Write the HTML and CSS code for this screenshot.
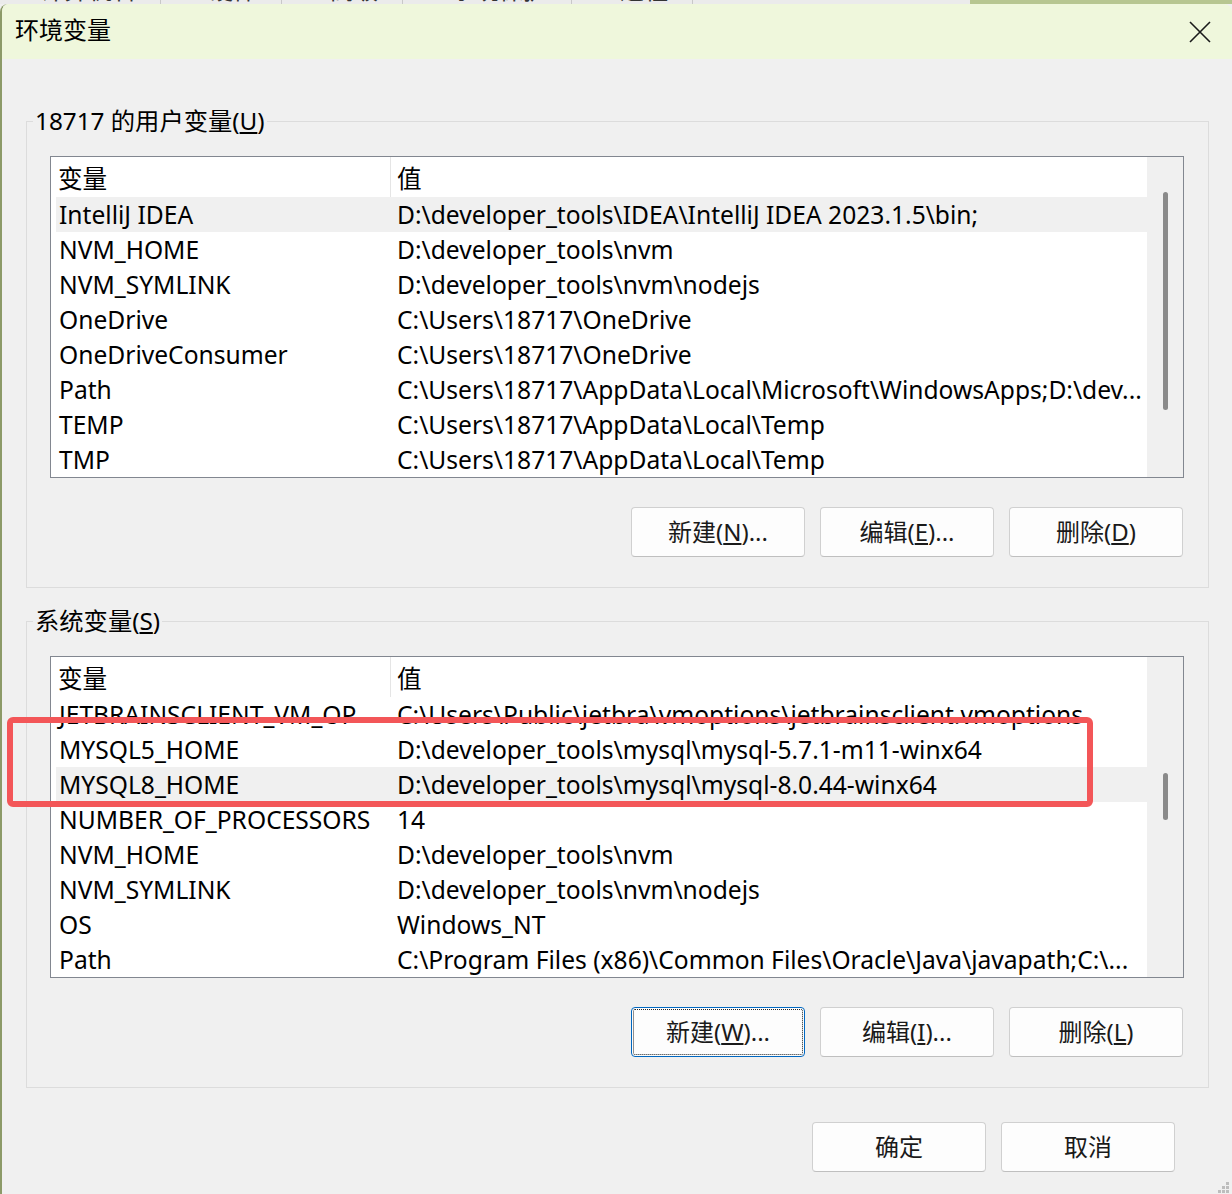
FILE: index.html
```html
<!DOCTYPE html>
<html lang="zh-CN">
  <head>
    <meta charset="UTF-8" />
    <title>环境变量</title>
    <link rel="stylesheet" href="styles.css">
  </head>
  <body>
    <!-- Ventana de atrás (solo se ve un borde) -->
    <div class="behind">
      <div class="behind-tabs">
        <span>计算机名</span><span>硬件</span><span>高级</span><span>系统保护</span><span>远程</span>
      </div>
      <div class="behind-title"></div>
    </div>

    <div class="window">
      <div class="titlebar">
        <div class="title">环境变量</div>
        <button class="close" aria-label="关闭">
          <svg width="22" height="22" viewBox="0 0 22 22">
            <path d="M1 1 L21 21 M21 1 L1 21" stroke="#1a1a1a" stroke-width="1.6" fill="none" />
          </svg>
        </button>
      </div>

      <div class="content">
        <!-- Variables de usuario -->
        <fieldset class="group">
          <legend>18717 的用户变量(<u>U</u>)</legend>
          <div class="list">
            <div class="list-main">
              <div class="list-head">
                <div class="col-name">变量</div>
                <div class="col-value">值</div>
              </div>
              <div class="list-rows">
                <div class="row hover"><div class="cell-name">IntelliJ IDEA</div><div class="cell-value">D:\developer_tools\IDEA\IntelliJ IDEA 2023.1.5\bin;</div></div>
                <div class="row"><div class="cell-name">NVM_HOME</div><div class="cell-value">D:\developer_tools\nvm</div></div>
                <div class="row"><div class="cell-name">NVM_SYMLINK</div><div class="cell-value">D:\developer_tools\nvm\nodejs</div></div>
                <div class="row"><div class="cell-name">OneDrive</div><div class="cell-value">C:\Users\18717\OneDrive</div></div>
                <div class="row"><div class="cell-name">OneDriveConsumer</div><div class="cell-value">C:\Users\18717\OneDrive</div></div>
                <div class="row"><div class="cell-name">Path</div><div class="cell-value">C:\Users\18717\AppData\Local\Microsoft\WindowsApps;D:\dev...</div></div>
                <div class="row"><div class="cell-name">TEMP</div><div class="cell-value">C:\Users\18717\AppData\Local\Temp</div></div>
                <div class="row"><div class="cell-name">TMP</div><div class="cell-value">C:\Users\18717\AppData\Local\Temp</div></div>
              </div>
            </div>
            <div class="scrollbar"><div class="thumb thumb-user"></div></div>
          </div>
          <div class="actions">
            <button class="btn">新建(<u>N</u>)...</button>
            <button class="btn">编辑(<u>E</u>)...</button>
            <button class="btn">删除(<u>D</u>)</button>
          </div>
        </fieldset>

        <!-- Variables del sistema -->
        <fieldset class="group group-system">
          <legend>系统变量(<u>S</u>)</legend>
          <div class="list">
            <div class="list-main">
              <div class="list-head">
                <div class="col-name">变量</div>
                <div class="col-value">值</div>
              </div>
              <div class="list-rows">
                <div class="row"><div class="cell-name">JETBRAINSCLIENT_VM_OP</div><div class="cell-value">C:\Users\Public\jetbra\vmoptions\jetbrainsclient.vmoptions</div></div>
                <div class="row"><div class="cell-name">MYSQL5_HOME</div><div class="cell-value">D:\developer_tools\mysql\mysql-5.7.1-m11-winx64</div></div>
                <div class="row hover"><div class="cell-name">MYSQL8_HOME</div><div class="cell-value">D:\developer_tools\mysql\mysql-8.0.44-winx64</div></div>
                <div class="row"><div class="cell-name">NUMBER_OF_PROCESSORS</div><div class="cell-value">14</div></div>
                <div class="row"><div class="cell-name">NVM_HOME</div><div class="cell-value">D:\developer_tools\nvm</div></div>
                <div class="row"><div class="cell-name">NVM_SYMLINK</div><div class="cell-value">D:\developer_tools\nvm\nodejs</div></div>
                <div class="row"><div class="cell-name">OS</div><div class="cell-value">Windows_NT</div></div>
                <div class="row"><div class="cell-name">Path</div><div class="cell-value">C:\Program Files (x86)\Common Files\Oracle\Java\javapath;C:\...</div></div>
              </div>
            </div>
            <div class="scrollbar"><div class="thumb thumb-system"></div></div>
          </div>
          <div class="actions">
            <button class="btn focused">新建(<u>W</u>)...</button>
            <button class="btn">编辑(<u>I</u>)...</button>
            <button class="btn">删除(<u>L</u>)</button>
          </div>
        </fieldset>

        <div class="dialog-actions">
          <button class="btn">确定</button>
          <button class="btn">取消</button>
        </div>
      </div>

      <!-- Marco rojo de anotación -->
      <div class="annotation"></div>

      <svg class="grip" width="12" height="12" viewBox="0 0 12 12">
        <rect x="8" y="0" width="3" height="3" fill="#bdbdbd" />
        <rect x="4" y="4" width="3" height="3" fill="#bdbdbd" />
        <rect x="8" y="4" width="3" height="3" fill="#bdbdbd" />
        <rect x="0" y="8" width="3" height="3" fill="#bdbdbd" />
        <rect x="4" y="8" width="3" height="3" fill="#bdbdbd" />
        <rect x="8" y="8" width="3" height="3" fill="#bdbdbd" />
      </svg>
    </div>
  </body>
</html>
```

FILE: styles.css
```css
body {
  margin: 0;
  height: 1194px;
  overflow: hidden;
  font-family: "Noto Sans", "Noto Sans CJK SC", sans-serif;
  font-size: 24px;
  color: #000;
  background: #f0f0f0;
}

/* Ventana de atrás */
.behind {
  height: 4px;
  overflow: hidden;
  display: flex;
  background: #ebebeb;
}

.behind-tabs {
  flex: 1;
  display: flex;
  gap: 48px;
  padding-left: 40px;
  margin-top: -22px;
  line-height: 24px;
  color: #333;
}

.behind-tabs span {
  border-right: 1px solid #c8c8c8;
  padding-right: 24px;
}

.behind-title {
  width: 262px;
  background: #b7c691;
}

/* Ventana principal */
.window {
  position: relative;
  height: 1190px;
  background: #f0f0f0;
  border-left: 2px solid #8c9a68;
  border-radius: 8px 8px 0 0;
  overflow: hidden;
}

.titlebar {
  height: 55px;
  background: #eff7dc;
  display: flex;
  align-items: center;
  justify-content: space-between;
}

.title {
  padding-left: 13px;
  line-height: 30px;
  margin-top: -4px;
}

.close {
  border: none;
  background: none;
  padding: 0;
  margin-right: 21px;
  width: 22px;
  height: 22px;
  display: flex;
}

.content {
  padding-top: 47px;
}

/* Grupos */
.group {
  box-sizing: border-box;
  width: 1183px;
  margin: 0 0 0 24px;
  padding: 20px 24px 30px 23px;
  border: 1px solid #dcdcdc;
  min-width: 0;
}

.group legend {
  padding: 0 2px;
  margin-left: -17px;
  line-height: 30px;
  font-size: 24.3px;
}

.group-system {
  margin-top: 18px;
}

/* Lista */
.list {
  box-sizing: border-box;
  height: 322px;
  display: flex;
  border: 1px solid #828790;
  background: #fff;
  font-size: 24.6px;
}

.list-main {
  flex: 1;
  min-width: 0;
  overflow: hidden;
}

.list-head {
  display: flex;
  height: 40px;
  line-height: 37px;
}

.col-name {
  box-sizing: border-box;
  width: 340px;
  padding: 3px 0 0 7px;
  border-right: 1px solid #e5e5e5;
}

.col-value {
  padding: 3px 0 0 6px;
}

.list-rows {
  padding-left: 5px;
}

.row {
  display: flex;
  height: 35px;
  line-height: 35px;
  white-space: nowrap;
}

.row.hover {
  background: #f0f0f0;
}

.cell-name {
  box-sizing: border-box;
  width: 335px;
  padding-left: 3px;
  overflow: hidden;
}

.cell-value {
  flex: 1;
  min-width: 0;
  padding-left: 6px;
  overflow: hidden;
}

.scrollbar {
  width: 36px;
  background: #f0f0f0;
  display: flex;
  flex-direction: column;
  align-items: center;
}

.thumb {
  width: 5px;
  border-radius: 3px;
  background: #8a8a8a;
}

.thumb-user {
  margin-top: 35px;
  height: 218px;
}

.thumb-system {
  margin-top: 116px;
  height: 47px;
}

/* Botones */
.actions {
  display: flex;
  justify-content: flex-end;
  gap: 15px;
  margin-top: 29px;
  padding-right: 1px;
}

.btn {
  box-sizing: border-box;
  width: 174px;
  height: 50px;
  background: #fdfdfd;
  border: 1px solid #d0d0d0;
  border-bottom-color: #bfbfbf;
  border-radius: 4px;
  font-family: inherit;
  font-size: 24px;
  color: #1a1a1a;
  padding: 0 0 4px;
}

.btn.focused {
  border: 1px solid #0067c0;
  outline: 1px dotted #222;
  outline-offset: -3px;
}

.dialog-actions {
  box-sizing: border-box;
  width: 1183px;
  margin: 34px 0 0 24px;
  padding-right: 34px;
  display: flex;
  justify-content: flex-end;
  gap: 15px;
}

/* Marco rojo */
.annotation {
  position: absolute;
  left: 5px;
  top: 713px;
  width: 1086px;
  height: 90px;
  box-sizing: border-box;
  border: 6px solid #f35658;
  border-radius: 6px;
}

.grip {
  position: absolute;
  right: 2px;
  bottom: 0;
}
```
